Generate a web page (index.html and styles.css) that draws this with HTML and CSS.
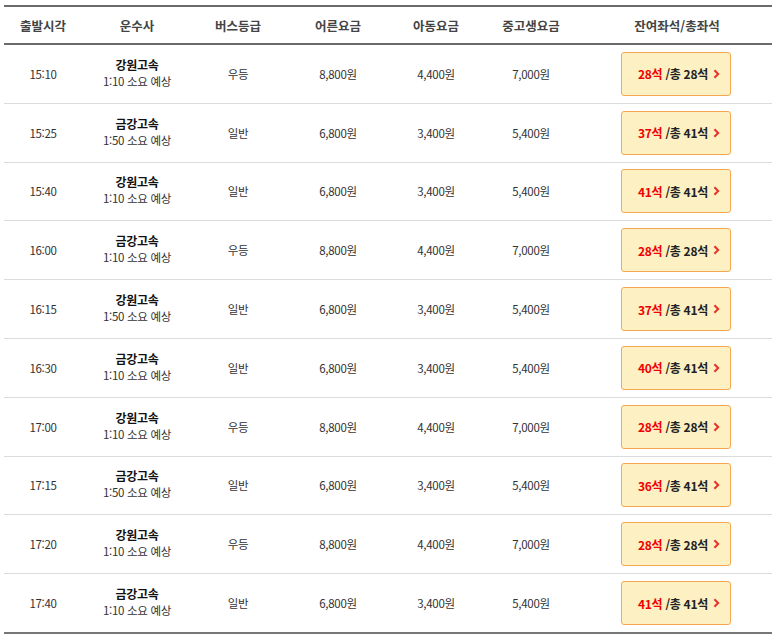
FILE: index.html
```html
<!DOCTYPE html>
<html lang="ko">
<head>
<meta charset="utf-8">
<link rel="stylesheet" href="styles.css">
</head>
<body>
<div class="wrap">
<table class="tbl">
  <colgroup>
    <col class="c1"><col class="c2"><col class="c3"><col class="c4"><col class="c5"><col class="c6"><col class="c7">
  </colgroup>
  <thead>
    <tr>
      <th>출발시각</th><th>운수사</th><th>버스등급</th><th>어른요금</th><th>아동요금</th><th>중고생요금</th><th>잔여좌석/총좌석</th>
    </tr>
  </thead>
  <tbody>
    <tr><td>15:10</td><td><b class="co">강원고속</b><span class="dur">1:10 소요 예상</span></td><td>우등</td><td>8,800원</td><td>4,400원</td><td>7,000원</td><td><a class="seat"><span class="rem">28석</span> /총 28석<svg class="chev" viewBox="0 0 8 12" width="7" height="10"><path d="M1.5 1.5 L6 6 L1.5 10.5" fill="none" stroke="#e8302a" stroke-width="2.4"/></svg></a></td></tr>
    <tr><td>15:25</td><td><b class="co">금강고속</b><span class="dur">1:50 소요 예상</span></td><td>일반</td><td>6,800원</td><td>3,400원</td><td>5,400원</td><td><a class="seat"><span class="rem">37석</span> /총 41석<svg class="chev" viewBox="0 0 8 12" width="7" height="10"><path d="M1.5 1.5 L6 6 L1.5 10.5" fill="none" stroke="#e8302a" stroke-width="2.4"/></svg></a></td></tr>
    <tr><td>15:40</td><td><b class="co">강원고속</b><span class="dur">1:10 소요 예상</span></td><td>일반</td><td>6,800원</td><td>3,400원</td><td>5,400원</td><td><a class="seat"><span class="rem">41석</span> /총 41석<svg class="chev" viewBox="0 0 8 12" width="7" height="10"><path d="M1.5 1.5 L6 6 L1.5 10.5" fill="none" stroke="#e8302a" stroke-width="2.4"/></svg></a></td></tr>
    <tr><td>16:00</td><td><b class="co">금강고속</b><span class="dur">1:10 소요 예상</span></td><td>우등</td><td>8,800원</td><td>4,400원</td><td>7,000원</td><td><a class="seat"><span class="rem">28석</span> /총 28석<svg class="chev" viewBox="0 0 8 12" width="7" height="10"><path d="M1.5 1.5 L6 6 L1.5 10.5" fill="none" stroke="#e8302a" stroke-width="2.4"/></svg></a></td></tr>
    <tr><td>16:15</td><td><b class="co">강원고속</b><span class="dur">1:50 소요 예상</span></td><td>일반</td><td>6,800원</td><td>3,400원</td><td>5,400원</td><td><a class="seat"><span class="rem">37석</span> /총 41석<svg class="chev" viewBox="0 0 8 12" width="7" height="10"><path d="M1.5 1.5 L6 6 L1.5 10.5" fill="none" stroke="#e8302a" stroke-width="2.4"/></svg></a></td></tr>
    <tr><td>16:30</td><td><b class="co">금강고속</b><span class="dur">1:10 소요 예상</span></td><td>일반</td><td>6,800원</td><td>3,400원</td><td>5,400원</td><td><a class="seat"><span class="rem">40석</span> /총 41석<svg class="chev" viewBox="0 0 8 12" width="7" height="10"><path d="M1.5 1.5 L6 6 L1.5 10.5" fill="none" stroke="#e8302a" stroke-width="2.4"/></svg></a></td></tr>
    <tr><td>17:00</td><td><b class="co">강원고속</b><span class="dur">1:10 소요 예상</span></td><td>우등</td><td>8,800원</td><td>4,400원</td><td>7,000원</td><td><a class="seat"><span class="rem">28석</span> /총 28석<svg class="chev" viewBox="0 0 8 12" width="7" height="10"><path d="M1.5 1.5 L6 6 L1.5 10.5" fill="none" stroke="#e8302a" stroke-width="2.4"/></svg></a></td></tr>
    <tr><td>17:15</td><td><b class="co">금강고속</b><span class="dur">1:50 소요 예상</span></td><td>일반</td><td>6,800원</td><td>3,400원</td><td>5,400원</td><td><a class="seat"><span class="rem">36석</span> /총 41석<svg class="chev" viewBox="0 0 8 12" width="7" height="10"><path d="M1.5 1.5 L6 6 L1.5 10.5" fill="none" stroke="#e8302a" stroke-width="2.4"/></svg></a></td></tr>
    <tr><td>17:20</td><td><b class="co">강원고속</b><span class="dur">1:10 소요 예상</span></td><td>우등</td><td>8,800원</td><td>4,400원</td><td>7,000원</td><td><a class="seat"><span class="rem">28석</span> /총 28석<svg class="chev" viewBox="0 0 8 12" width="7" height="10"><path d="M1.5 1.5 L6 6 L1.5 10.5" fill="none" stroke="#e8302a" stroke-width="2.4"/></svg></a></td></tr>
    <tr><td>17:40</td><td><b class="co">금강고속</b><span class="dur">1:10 소요 예상</span></td><td>일반</td><td>6,800원</td><td>3,400원</td><td>5,400원</td><td><a class="seat"><span class="rem">41석</span> /총 41석<svg class="chev" viewBox="0 0 8 12" width="7" height="10"><path d="M1.5 1.5 L6 6 L1.5 10.5" fill="none" stroke="#e8302a" stroke-width="2.4"/></svg></a></td></tr>
  </tbody>
</table>
</div>
</body>
</html>
```
FILE: styles.css
```css
html, body {
  margin: 0;
  padding: 0;
  background: #fff;
}
body {
  font-family: "Noto Sans CJK KR", "Noto Sans", sans-serif;
  color: #333;
}
.wrap {
  padding: 5px 4px 0 4px;
}
.tbl {
  width: 768px;
  border-collapse: collapse;
  table-layout: fixed;
  border-top: 2px solid #6a6a6a;
  border-bottom: 2px solid #777;
}
.c1 { width: 78px; }
.c2 { width: 110px; }
.c3 { width: 92px; }
.c4 { width: 108px; }
.c5 { width: 88px; }
.c6 { width: 102px; }
.c7 { width: 190px; }
.tbl th {
  height: 36px;
  padding: 0;
  font-size: 12.5px;
  font-weight: bold;
  color: #444;
  text-align: center;
  border-bottom: 2px solid #6a6a6a;
}
.tbl td {
  height: 57.8px;
  padding: 0;
  font-size: 11.5px;
  color: #333;
  text-align: center;
  vertical-align: middle;
  border-bottom: 1px solid #dcdcdc;
  letter-spacing: -0.3px;
}
.tbl tbody tr:last-child td {
  border-bottom: none;
}
.co {
  display: block;
  font-size: 12px;
  font-weight: bold;
  color: #111;
  line-height: 17px;
  margin-top: -2px;
}
.dur {
  display: block;
  line-height: 17px;
}
.seat {
  display: inline-flex;
  align-items: center;
  justify-content: center;
  box-sizing: border-box;
  width: 110px;
  height: 44px;
  margin-left: -2px;
  padding-left: 6px;
  background: #fdf0c2;
  border: 1px solid #f5a850;
  border-radius: 3px;
  font-size: 12px;
  font-weight: bold;
  color: #222;
  letter-spacing: -0.3px;
  white-space: pre;
}
.rem {
  color: #f00000;
}
.chev {
  margin-left: 5px;
  display: block;
}
```
